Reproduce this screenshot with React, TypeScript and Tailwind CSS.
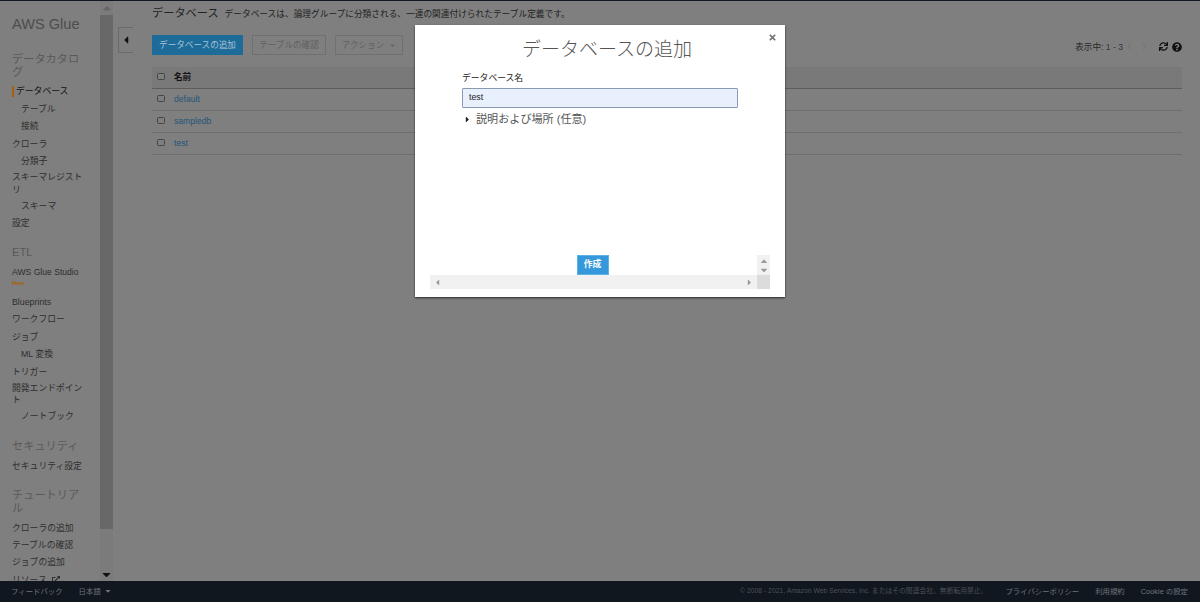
import React from "react";
import { FaCaretDown, FaCaretLeft, FaCaretRight, FaCaretUp, FaChevronLeft, FaChevronRight, FaExternalLinkAlt, FaQuestionCircle, FaSync, FaTimes } from "react-icons/fa";

const font = "font-['Liberation_Sans','Noto_Sans_CJK_JP',sans-serif]";

type NavItem = { t: string; sub?: boolean; active?: boolean; h?: string; icon?: boolean };

function Heading({ children, className }: { children: React.ReactNode; className: string }) {
  return <div className={`text-[11.2px] leading-[13px] text-[#595959] w-[72px] ${className}`}>{children}</div>;
}

function Item({ t, sub, active, h, icon }: NavItem) {
  return (
    <div className={`relative text-[8.8px] leading-[12.5px] w-[72px] flex flex-col justify-center ${h ?? "h-[17.4px]"} ${sub ? "pl-[9px]" : ""} ${active ? "text-[#111]" : "text-[#2e2e2e]"}`}>
      {active && <span className="absolute left-0 top-[3px] bottom-[3px] w-[1.5px] bg-[#a85f0c]" />}
      <span className={active ? "pl-[4px]" : ""}>
        {t}
        {icon && <FaExternalLinkAlt className="inline ml-[5px] mb-[2px] text-[8px]" />}
      </span>
    </div>
  );
}

function Sidebar() {
  return (
    <aside className="w-[113px] shrink-0 flex h-full overflow-hidden">
      <div className="w-[100px] pl-[12px] pt-[14px]">
        <div className="text-[14.6px] leading-[18px] text-[#4d4d4d]">AWS Glue</div>
        <Heading className="mt-[20px]">データカタログ</Heading>
        <div className="mt-[4px]">
          <Item t="データベース" active />
          <Item t="テーブル" sub />
          <Item t="接続" sub />
          <Item t="クローラ" />
          <Item t="分類子" sub />
          <Item t="スキーマレジストリ" h="h-[27.5px]" />
          <Item t="スキーマ" sub />
          <Item t="設定" />
        </div>
        <Heading className="mt-[14px]">ETL</Heading>
        <div className="mt-[6.5px]">
          <div className="h-[27.8px] text-[8.6px] leading-[12px] text-[#2e2e2e]">
            AWS Glue Studio
            <div className="text-[6px] leading-[11px] font-bold text-[#a85f0c]">New</div>
          </div>
          <Item t="Blueprints" />
          <Item t="ワークフロー" />
          <Item t="ジョブ" />
          <Item t="ML 変換" sub />
          <Item t="トリガー" />
          <Item t="開発エンドポイント" h="h-[27.5px]" />
          <Item t="ノートブック" sub />
        </div>
        <Heading className="mt-[14.5px]">セキュリティ</Heading>
        <div className="mt-[5px]">
          <Item t="セキュリティ設定" />
        </div>
        <Heading className="mt-[14px]">チュートリアル</Heading>
        <div className="mt-[4px]">
          <Item t="クローラの追加" />
          <Item t="テーブルの確認" />
          <Item t="ジョブの追加" />
          <Item t="リソース" icon />
        </div>
      </div>
      <div className="w-[13px] h-full flex flex-col items-center bg-[#7b7b7b]">
        <FaCaretUp className="text-[8px] h-[14px] text-[#666]" />
        <div className="w-full h-[514px] bg-[#686868]" />
        <div className="flex-1" />
        <FaCaretDown className="text-[9px] h-[13px] text-[#111]" />
      </div>
    </aside>
  );
}

function Cb() {
  return <span className="block -mt-[2px] w-[7.5px] h-[7.5px] rounded-[1.5px] border border-[#444] bg-[#7f7f7f]" />;
}

const rows = ["default", "sampledb", "test"];

function Content() {
  return (
    <main className="flex-1 min-w-0 flex h-full">
      <div className="pt-[26px] pl-[5px] w-[39px] shrink-0">
        <div className="w-[15px] h-[26px] border border-r-0 border-[#6a6a6a] rounded-l-[2px] flex items-center justify-center">
          <FaCaretLeft className="text-[12px] text-[#111]" />
        </div>
      </div>
      <div className="w-[1030px] pt-[3px]">
        <div className="flex items-baseline gap-[6px] h-[20px] text-[#222]">
          <span className="text-[11.2px] leading-[18px]">データベース</span>
          <span className="text-[8.7px] leading-[18px]">データベースは、論理グループに分類される、一連の関連付けられたテーブル定義です。</span>
        </div>
        <div className="mt-[11px] flex items-center text-[8.6px] h-[20px]">
          <div className="h-[20px] w-[91px] bg-[#1d6b99] text-[#a6c2d3] flex items-center justify-center">データベースの追加</div>
          <div className="ml-[9px] h-[20px] w-[74px] border border-[#707070] text-[#5f5f5f] flex items-center justify-center">テーブルの確認</div>
          <div className="ml-[9px] h-[20px] w-[68px] border border-[#707070] text-[#5f5f5f] flex items-center justify-center gap-[5px]">
            アクション <FaCaretDown className="text-[7px]" />
          </div>
          <div className="ml-auto flex items-center text-[#2a2a2a] mt-[4px]">
            <span>表示中: <span className="text-[#2d3a48]">1 - 3</span></span>
            <FaChevronLeft className="ml-[3px] text-[7px] text-[#757575]" />
            <FaChevronRight className="ml-[8px] text-[7px] text-[#757575]" />
            <FaSync className="ml-[11px] text-[9px] text-[#111]" />
            <FaQuestionCircle className="ml-[4px] text-[10px] text-[#111]" />
          </div>
        </div>
        <div className="mt-[12px] text-[8.6px]">
          <div className="h-[22px] bg-[#797979] border-b border-[#5c5c5c] flex items-center pl-[5px] gap-[9.5px] font-bold text-[#111]">
            <Cb />
            名前
          </div>
          {rows.map((r) => (
            <div key={r} className="h-[22px] border-b border-[#6e6e6e] flex items-center pl-[5px] gap-[9.5px] text-[#1f5578]">
              <Cb />
              {r}
            </div>
          ))}
        </div>
      </div>
    </main>
  );
}

function Modal() {
  return (
    <div className="absolute left-[415px] top-[25px] w-[370px] h-[272px] bg-white shadow-[0_1px_2px_rgba(0,0,0,0.7)] flex flex-col">
      <FaTimes className="absolute right-[8px] top-[8px] text-[9px] text-[#777]" />
      <h2 className="mt-[13px] pl-[14px] text-center text-[19px] leading-[24px] font-light text-[#555]">データベースの追加</h2>
      <div className="ml-[47px] w-[276px] mt-[10px]">
        <div className="text-[8.8px] leading-[12px] text-[#222]">データベース名</div>
        <div className="mt-[4px] h-[20px] bg-[#e8f0fe] border border-[#8a9ab0] rounded-[1px] flex items-center pl-[6px] text-[8.8px] text-[#222]">test</div>
        <div className="mt-[3px] flex items-center h-[16px] text-[11.1px] text-[#555]">
          <FaCaretRight className="text-[9px] text-[#222] ml-[1px] mr-[4px]" />
          説明および場所 (任意)
        </div>
      </div>
      <div className="flex-1" />
      <div className="mb-[8px] ml-[15px] w-[340px]">
        <div className="h-[20px] flex">
          <div className="w-[327px] flex justify-center">
            <button className="-ml-[2px] w-[32px] h-[20px] bg-[#3498db] border border-[#5eb0e5] text-white text-[8.8px] font-bold">作成</button>
          </div>
          <div className="w-[13px] bg-[#f1f1f1] flex flex-col items-center justify-center text-[#999]">
            <FaCaretUp className="text-[10px] -mb-[1px]" />
            <FaCaretDown className="text-[10px]" />
          </div>
        </div>
        <div className="h-[14px] flex">
          <div className="w-[327px] bg-[#f1f1f1] flex items-center justify-between px-[3px] text-[#999]">
            <FaCaretLeft className="text-[9px]" />
            <FaCaretRight className="text-[9px]" />
          </div>
          <div className="w-[13px] bg-[#dcdcdc]" />
        </div>
      </div>
    </div>
  );
}

export default function App() {
  return (
    <div className={`relative w-[1200px] h-[602px] overflow-hidden flex flex-col bg-[#7f7f7f] ${font}`}>
      <div className="h-[1px] bg-[#12181f] shrink-0" />
      <div className="flex-1 min-h-0 flex">
        <Sidebar />
        <Content />
      </div>
      <footer className="relative h-[21px] shrink-0 bg-[#10171f] flex items-center pl-[11px] pr-[12px] text-[7.4px] text-[#6f747a]">
        <span>フィードバック</span>
        <span className="ml-[16px] flex items-center gap-[3px]">日本語 <FaCaretDown className="text-[8px]" /></span>
        <span className="ml-auto text-[6.8px] text-[#4b5056]">© 2008 - 2021, Amazon Web Services, Inc. またはその関連会社。無断転用禁止。</span>
        <span className="ml-[18px]">プライバシーポリシー</span>
        <span className="ml-[16px]">利用規約</span>
        <span className="ml-[16px]">Cookie の設定</span>
      </footer>
      <Modal />
    </div>
  );
}
